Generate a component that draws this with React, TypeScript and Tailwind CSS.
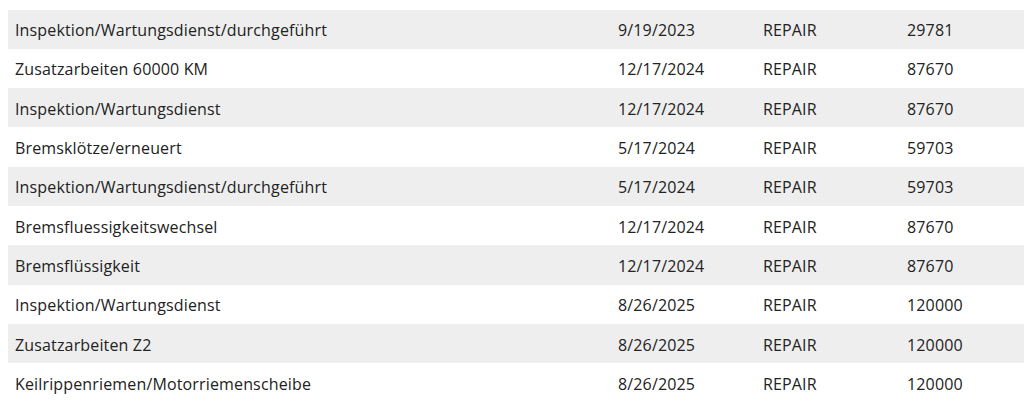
const rows = [
  { name: "Scheibenwischer/erneuert", date: "12/17/2024", type: "REPAIR", km: "87670" },
  { name: "Inspektion/Wartungsdienst/durchgeführt", date: "9/19/2023", type: "REPAIR", km: "29781" },
  { name: "Zusatzarbeiten 60000 KM", date: "12/17/2024", type: "REPAIR", km: "87670" },
  { name: "Inspektion/Wartungsdienst", date: "12/17/2024", type: "REPAIR", km: "87670" },
  { name: "Bremsklötze/erneuert", date: "5/17/2024", type: "REPAIR", km: "59703" },
  { name: "Inspektion/Wartungsdienst/durchgeführt", date: "5/17/2024", type: "REPAIR", km: "59703" },
  { name: "Bremsfluessigkeitswechsel", date: "12/17/2024", type: "REPAIR", km: "87670" },
  { name: "Bremsflüssigkeit", date: "12/17/2024", type: "REPAIR", km: "87670" },
  { name: "Inspektion/Wartungsdienst", date: "8/26/2025", type: "REPAIR", km: "120000" },
  { name: "Zusatzarbeiten Z2", date: "8/26/2025", type: "REPAIR", km: "120000" },
  { name: "Keilrippenriemen/Motorriemenscheibe", date: "8/26/2025", type: "REPAIR", km: "120000" },
]

export default function App() {
  return (
    <div className="h-[411px] w-[1024px] overflow-hidden bg-white pl-2 font-['Open_Sans',sans-serif] text-[16px] tracking-[0.15px] text-[#222]">
      <div className="mt-[-30.5px]">
        {rows.map((r, i) => (
          <div
            key={i}
            className={`flex items-center pt-[2px] ${i === 0 ? "h-[40px]" : "h-[39.33px]"} ${i % 2 === 1 ? "bg-[#eeeeee]" : "bg-white"}`}
          >
            <div className="w-[610px] pl-[7px]">{r.name}</div>
            <div className="w-[145px]">{r.date}</div>
            <div className="w-[144px]">{r.type}</div>
            <div>{r.km}</div>
          </div>
        ))}
      </div>
    </div>
  )
}
